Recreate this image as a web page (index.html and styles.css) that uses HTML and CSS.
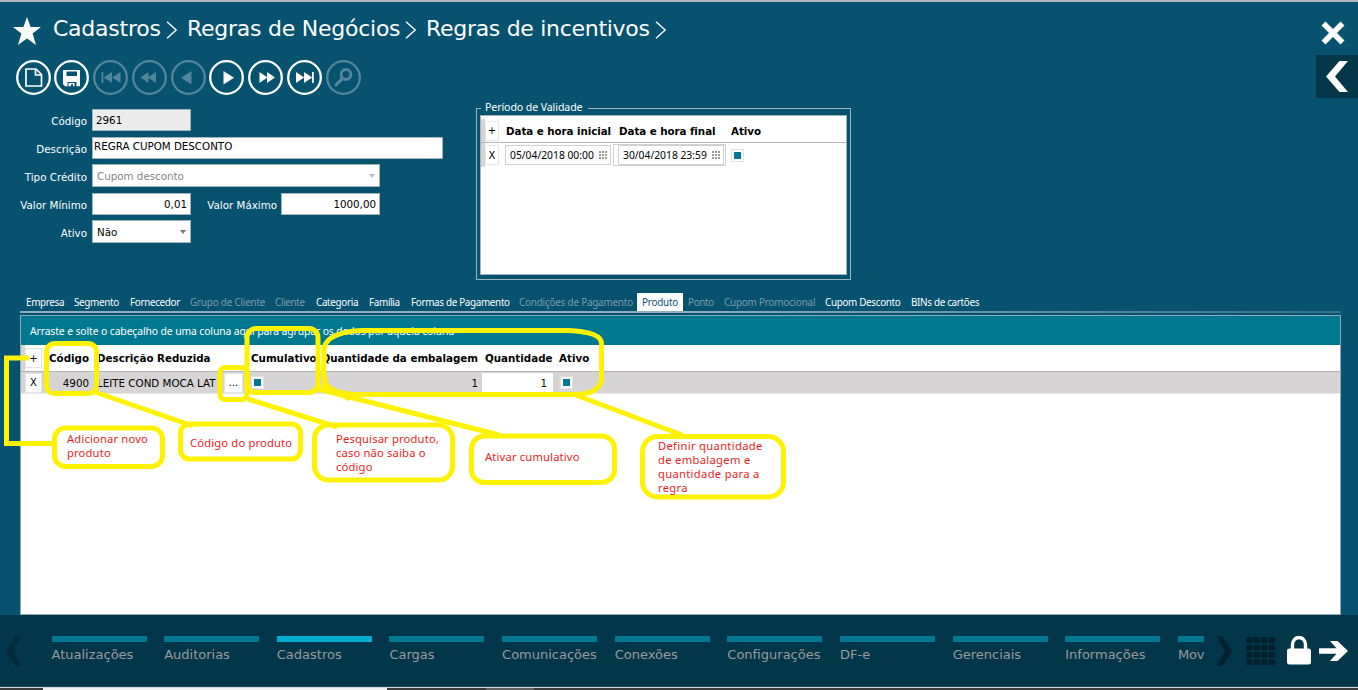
FILE: index.html
```html
<!DOCTYPE html>
<html lang="pt-BR">
<head>
<meta charset="utf-8">
<title>Regras de incentivos</title>
<link rel="stylesheet" href="styles.css">
</head>
<body>
<div class="app">
  <header class="header">
    <div class="crumbs">
      <svg class="star" viewBox="0 0 28 28"><path d="M14 0l3.600 10H28l-8.400 6.600L23 28l-9-6.600L5 28l3.400-11.400L0 10h10.400z" fill="#fff"/></svg>
      <span class="crumb c1">Cadastros</span><svg class="chev" viewBox="0 0 12 18"><path d="M1 .8L10.200 9 1 17.200"/></svg>
      <span class="crumb c2">Regras de Negócios</span><svg class="chev" viewBox="0 0 12 18"><path d="M1 .8L10.200 9 1 17.200"/></svg>
      <span class="crumb c3">Regras de incentivos</span><svg class="chev" viewBox="0 0 12 18"><path d="M1 .8L10.200 9 1 17.200"/></svg>
    </div>
    <div class="corner">
      <svg class="close" viewBox="0 0 24 24"><path d="M2.500 2.500l19 19M21.500 2.500l-19 19" stroke="#fff" stroke-width="5.600"/></svg>
      <div class="collapse"><svg viewBox="0 0 22 31"><path d="M13.500 0H22L9 15.500 22 31h-8.500L0 15.500z" fill="#fff"/></svg></div>
    </div>
  </header>

  <div class="toolbar">
    <svg class="tool" viewBox="0 0 35 35"><circle cx="17.500" cy="17.500" r="16.300"/><path d="M10 9h10l5.500 5.500V26H10zM19.500 9v6h6" fill="none" stroke="#fff" stroke-width="1.700"/></svg>
    <svg class="tool" viewBox="0 0 35 35"><circle cx="17.500" cy="17.500" r="16.300"/><path fill-rule="evenodd" d="M9 10h17v16.300h-3.500V22h-9v4.300H11l-2-2zM12.500 11.500v4.500h10.500v-4.500z" fill="#fff"/><path d="M14.500 23h6v3.300h-1.500v-2h-2v2h-2.500z" fill="#fff"/></svg>
    <svg class="tool off" viewBox="0 0 35 35"><circle cx="17.500" cy="17.500" r="16.300"/><path d="M8.500 12h1.800v11H8.500zM19 12v11l-8.200-5.500zM27.500 12v11l-8.200-5.500z" fill="#fff"/></svg>
    <svg class="tool off" viewBox="0 0 35 35"><circle cx="17.500" cy="17.500" r="16.300"/><path d="M16.500 12v11l-8-5.500zM24 12v11l-8-5.500z" fill="#fff"/></svg>
    <svg class="tool off" viewBox="0 0 35 35"><circle cx="17.500" cy="17.500" r="16.300"/><path d="M20.500 11v13.500L10 17.700z" fill="#fff"/></svg>
    <svg class="tool" viewBox="0 0 35 35"><circle cx="17.500" cy="17.500" r="16.300"/><path d="M14.500 11v13.500L25 17.700z" fill="#fff"/></svg>
    <svg class="tool" viewBox="0 0 35 35"><circle cx="17.500" cy="17.500" r="16.300"/><path d="M11.500 12v11l8-5.500zM19 12v11l8-5.500z" fill="#fff"/></svg>
    <svg class="tool" viewBox="0 0 35 35"><circle cx="17.500" cy="17.500" r="16.300"/><path d="M25 12h1.800v11H25zM9 12v11l8.200-5.500zM17 12v11l8.200-5.500z" fill="#fff"/></svg>
    <svg class="tool off" viewBox="0 0 35 35"><circle cx="17.500" cy="17.500" r="16.300"/><circle class="lens" cx="20" cy="14.500" r="4.900"/><path d="M16.500 18.300L10 24.800" stroke="#fff" stroke-width="3.200" stroke-linecap="round"/></svg>
  </div>

  <section class="top">
    <form class="form">
      <div class="row"><label>Código</label><div class="field short readonly">2961</div></div>
      <div class="row"><label>Descrição</label><div class="field long">REGRA CUPOM DESCONTO</div></div>
      <div class="row"><label>Tipo Crédito</label><div class="field select wide disabled"><span>Cupom desconto</span><i></i></div></div>
      <div class="row"><label>Valor Mínimo</label><div class="field short num">0,01</div><label class="second">Valor Máximo</label><div class="field short num">1000,00</div></div>
      <div class="row"><label>Ativo</label><div class="field select short"><span>Não</span><i></i></div></div>
    </form>
    <div class="period">
      <div class="legend"><span>Período de Validade</span></div>
      <div class="ptable">
        <div class="phead"><b class="grip"></b><span class="btn">+</span><span class="th p1">Data e hora inicial</span><span class="th p2">Data e hora final</span><span class="th">Ativo</span></div>
        <div class="prow"><b class="grip"></b><span class="btn">X</span>
          <div class="date"><span>05/04/2018 00:00</span><svg viewBox="0 0 8 8"><path d="M0 1h8M0 4h8M0 7h8"/></svg></div>
          <div class="dcell"><div class="date"><span>30/04/2018 23:59</span><svg viewBox="0 0 8 8"><path d="M0 1h8M0 4h8M0 7h8"/></svg></div></div>
          <span class="check"></span>
        </div>
      </div>
    </div>
  </section>

  <nav class="tabs">
    <span class="t1">Empresa</span><span class="t2">Segmento</span><span class="t3">Fornecedor</span><span class="t4 dim">Grupo de Cliente</span><span class="t5 dim">Cliente</span><span class="t6">Categoria</span><span class="t7">Família</span><span class="t8">Formas de Pagamento</span><span class="t9 dim">Condições de Pagamento</span><span class="t10 active">Produto</span><span class="t11 dim">Ponto</span><span class="t12 dim">Cupom Promocional</span><span class="t13">Cupom Desconto</span><span class="t14">BINs de cartões</span>
  </nav>
  <div class="tabline"></div>

  <main class="panel">
    <div class="groupbar">Arraste e solte o cabeçalho de uma coluna aqui para agrupar os dados por aquela coluna</div>
    <div class="grid ghead"><b class="grip"></b><span class="btn">+</span><span class="r">Código</span><span class="desc">Descrição Reduzida</span><span class="cum">Cumulativo</span><span class="r">Quantidade da embalagem</span><span class="qt">Quantidade</span><span class="at">Ativo</span></div>
    <div class="grid grow"><b class="grip"></b><span class="btn">X</span><span class="r">4900</span><div class="desc prod"><span>LEITE COND MOCA LAT</span><span class="btn dots">...</span></div><span class="cum"><i class="check"></i></span><span class="r">1</span><span class="qty">1</span><span class="at"><i class="check"></i></span></div>
  </main>

  <footer class="nav">
    <svg class="arr" viewBox="0 0 16 30"><path d="M9.500 0h6L7 15l8.500 15h-6L0 15z" fill="#022c3d"/></svg>
    <div class="items">
      <div class="item">Atualizações</div><div class="item">Auditorias</div><div class="item on">Cadastros</div><div class="item">Cargas</div><div class="item">Comunicações</div><div class="item">Conexões</div><div class="item">Configurações</div><div class="item">DF-e</div><div class="item">Gerenciais</div><div class="item">Informações</div><div class="item last">Mov</div>
    </div>
    <svg class="arr right" viewBox="0 0 16 30"><path d="M6.500 0h-6L9 15 .5 30h6L16 15z" fill="#02222f"/></svg>
    <svg class="apps" viewBox="0 0 29 28"><path d="M0 3h29M0 10.500h29M0 18h29M0 25.300h29" stroke="#02202c" stroke-width="5.500" stroke-dasharray="6.300 1.270"/></svg>
    <svg class="lock" viewBox="0 0 24 29"><path d="M5.500 14V8.500a6.500 7 0 0 1 13 0V14" fill="none" stroke="#fff" stroke-width="3.400"/><rect y="12.500" width="24" height="16" rx="2.500" fill="#fff"/></svg>
    <svg class="go" viewBox="0 0 29 20"><path d="M0 7.300h17.500L11 0h7.500L29 10 18.500 20H11l6.500-7.300H0z" fill="#fff"/></svg>
  </footer>
  <div class="taskbar"><span class="tb1"></span><span class="tb2"></span></div>

  <svg class="marks" viewBox="0 0 1358 690">
    <path d="M29 358H6.500V443.500H54"/>
    <rect x="46.500" y="343.500" width="50" height="50" rx="8"/>
    <rect x="220" y="367.500" width="27" height="32" rx="5"/>
    <rect x="247" y="328.500" width="71" height="64" rx="9"/>
    <path d="M324.500 357Q322 344 331 338Q342 331 362 330.500H568Q601 332 601.500 343V380Q599 394 575 394.500H354Q331 393 326 384Q322 374 324.500 357Z"/>
    <rect x="54.500" y="428" width="108" height="38.500" rx="11"/>
    <rect x="180.500" y="424" width="120" height="35" rx="9"/>
    <rect x="314.500" y="425" width="138" height="55" rx="14"/>
    <rect x="471.500" y="436" width="143" height="46.500" rx="13"/>
    <rect x="642.500" y="436.500" width="141" height="60.500" rx="15"/>
    <path d="M92 391L193 426M248 399L337 427M318 389L499 435M322 384L350 399M573 394L682 435"/>
  </svg>
  <p class="note n1">Adicionar novo<br>produto</p>
  <p class="note n2">Código do produto</p>
  <p class="note n3">Pesquisar produto,<br>caso não saiba o<br>código</p>
  <p class="note n4">Ativar cumulativo</p>
  <p class="note n5">Definir quantidade<br>de embalagem e<br>quantidade para a<br>regra</p>
</div>
</body>
</html>
```
FILE: styles.css
```css
* { box-sizing: border-box; }
body { margin: 0; }
svg { display: block; flex: none; }
.app {
  position: relative;
  width: 1358px;
  height: 690px;
  overflow: hidden;
  display: flex;
  flex-direction: column;
  background: #07526f;
  border-top: 2px solid #b4b8bc;
  font-family: "DejaVu Sans", Verdana, sans-serif;
  font-size: 10.3px;
  color: #000;
}
.header { display: flex; justify-content: space-between; height: 56px; flex: none; }
.crumbs { display: flex; align-items: flex-start; padding: 12px 0 0 13px; color: #fff; font-size: 22px; line-height: 30px; }
.star { width: 28px; height: 28px; margin: 3px 12px 0 0; }
.crumb { white-space: nowrap; letter-spacing: -0.25px; }
.c1 { width: 113px; }
.c2 { width: 218px; }
.c3 { width: 229px; letter-spacing: -0.3px; }
.chev { width: 12px; height: 18px; margin: 7px 9px 0 0; fill: none; stroke: #fff; stroke-width: 1.4; }
.corner { width: 42px; display: flex; flex-direction: column; }
.close { width: 24px; height: 24px; margin: 19px 0 10px 5px; }
.collapse { width: 42px; height: 43px; flex: none; background: #033649; padding: 6px 0 0 10px; }
.collapse svg { width: 22px; height: 31px; }

.toolbar { display: flex; gap: 3.75px; padding: 1.5px 0 0 15.5px; height: 49px; flex: none; }
.tool { width: 35px; height: 35px; }
.tool circle { fill: none; stroke: #fff; stroke-width: 2.3; }
.tool .lens { stroke-width: 3; }
.off { opacity: .3; }

.top { display: flex; height: 186px; flex: none; }
.form { width: 476px; padding-top: 1px; display: flex; flex-direction: column; gap: 5px; }
.row { display: flex; align-items: center; height: 23px; }
.row label { width: 92px; padding: 3px 5px 0 0; text-align: right; color: #fff; }
.row .second { width: 90px; padding-right: 4px; }
.field { height: 22px; line-height: 20px; background: #fff; border: 1px solid #9db4bd; padding: 0 3px; white-space: nowrap; }
.short { width: 99px; }
.long { width: 351px; padding-left: 1px; line-height: 17px; }
.wide { width: 288px; }
.readonly { background: #ebebeb; }
.num { text-align: right; }
.select { height: 23px; padding: 0 4px; display: flex; justify-content: space-between; align-items: center; }
.select i { border: 3.5px solid transparent; border-top: 4px solid #777; border-bottom: 0; margin-top: 1px; }
.disabled { color: #858585; }
.disabled i { border-top-color: #bbb; }

.period { position: relative; width: 375px; height: 172px; margin-top: 1px; border: 1px solid #9db4bd; padding: 6px 3px 3px; }
.legend { position: absolute; left: 4px; top: -9px; width: 107px; padding-left: 4px; background: #07526f; color: #fff; font: 10.6px/14px "Noto Sans", sans-serif; white-space: nowrap; letter-spacing: -0.1px; }
.ptable { height: 160px; background: #fff; border: 1px solid #9db4bd; }
.phead, .prow { display: flex; align-items: center; }
.phead { height: 27px; border-bottom: 1px solid #b3b3b3; padding-top: 3px; }
.grip { align-self: stretch; width: 4px; background: #d6d4d5; }
.btn { display: flex; align-items: center; justify-content: center; width: 14px; height: 20px; background: #fff; border: 1px solid #e4e4e4; font-size: 10px; }
.th, .ghead { font-weight: bold; font-size: 10.3px; white-space: nowrap; }
.th { letter-spacing: -0.05px; }
.p1 { width: 113px; margin-left: 7px; }
.p2 { width: 112px; }
.prow { height: 24px; }
.date { display: flex; align-items: center; justify-content: space-between; width: 106px; height: 20px; padding: 0 3px 0 4px; border: 1px solid #d0d0d0; white-space: nowrap; font: 10.3px "Noto Sans", sans-serif; }
.prow > .date { margin-left: 6px; }
.date svg { width: 8px; height: 8px; }
.date path { stroke: #777; stroke-width: 1.6; stroke-dasharray: 2 1; }
.dcell { width: 113px; height: 22px; margin: 0 6px 0 2px; padding-left: 4px; border: 1px solid #d0d0d0; }
.check { display: block; width: 11px; height: 11px; background: #007990; border: 2px solid #fff; outline: 1px solid #e2e2e2; }

.tabs { display: flex; align-items: stretch; padding-left: 21px; height: 18px; flex: none; color: #fff; font: 9.9px/19px "Noto Sans", sans-serif; letter-spacing: -0.33px; white-space: nowrap; }
.tabs span { flex: none; padding-left: 5px; }
.t1 { width: 48px; } .t2 { width: 56px; } .t3 { width: 60px; } .t4 { width: 85px; } .t5 { width: 41px; }
.t6 { width: 53px; } .t7 { width: 42px; } .t8 { width: 108px; } .t9 { width: 123px; } .t10 { width: 46px; }
.t11 { width: 36px; } .t12 { width: 101px; } .t13 { width: 86px; }
.t4, .t9, .t10, .t12 { letter-spacing: -0.2px; }
.tabs .dim { color: #7a9dac; }
.tabs .active { background: #fff; color: #07526f; }
.tabline { width: 1321px; height: 2px; flex: none; margin: 0 0 2px 20px; background: linear-gradient(90deg, #8cafbd, #8cafbd 50%, #33708a); }

.panel { width: 1321px; margin-left: 20px; height: 300px; flex: none; background: #fff; border: 1px solid #8cabb7; }
.groupbar { height: 29px; background: #007990; color: #fff; padding-left: 9px; font: 10.4px/31px "Noto Sans", sans-serif; letter-spacing: -0.12px; white-space: nowrap; }
.grid { display: grid; grid-template-columns: 4px 18px 46px 154px 77px 158px 75px 1fr; align-items: center; }
.grid > .grip { height: 100%; }
.ghead { height: 27px; background: #fff; border-bottom: 1px solid #b3b3b3; }
.ghead .btn { font-weight: normal; }
.grid > .btn { width: 17px; }
.grow { height: 22px; background: #d6d4d5; border-bottom: 1px solid #e8e8e8; }
.grow .r { padding-top: 1px; }
.r { text-align: right; }
.desc { padding-left: 8px; white-space: nowrap; }
.prod { display: flex; align-items: center; justify-content: space-between; }
.dots { width: 19px; }
.cum { padding-left: 9px; }
.ghead .cum { padding-left: 8px; }
.qt { padding-left: 7px; }
.qty { width: 71px; height: 19px; margin-left: 4px; padding-right: 6px; background: #fff; text-align: right; line-height: 20px; }
.at { padding-left: 6px; }
.grow .at { padding-left: 8px; }

.nav { height: 72px; flex: none; display: flex; align-items: flex-start; background: #033649; border-bottom: 1px solid #0b4c60; padding: 21px 0 0 6px; }
.arr { width: 16px; height: 30px; margin-right: 29.5px; }
.items { display: flex; gap: 17.65px; width: 1152.5px; }
.item { flex: none; width: 95px; height: 34px; border-top: 6px solid #007990; color: #999b9d; font-size: 13px; line-height: 25px; white-space: nowrap; }
.last { width: 26px; letter-spacing: -0.2px; }
.on { border-top-color: #00adce; }
.right { margin: 0 14px 0 12px; }
.apps { width: 29px; height: 28px; margin-top: 1px; }
.lock { width: 24px; height: 29px; margin: 0 8px 0 12px; }
.go { width: 29px; height: 20px; margin-top: 5px; }
.taskbar { display: flex; height: 3px; flex: none; background: #3a3a3a; border-top: 1px solid #d4d4d4; }
.tb1 { width: 344px; margin-left: 43px; background: #f0f0f0; }
.tb2 { width: 48px; margin-left: 99px; background: #606060; }

.marks { position: absolute; left: 0; top: -2px; width: 1358px; height: 690px; fill: none; stroke: #fff200; stroke-width: 5; }
.note { position: absolute; margin: 0; color: #ed1c24; font: 11.2px/14px "Noto Sans", sans-serif; letter-spacing: 0.17px; white-space: nowrap; }
.n1 { left: 67px; top: 430px; }
.n2 { left: 190px; top: 434px; }
.n3 { left: 336px; top: 430px; }
.n4 { left: 485px; top: 448px; }
.n5 { left: 658px; top: 437px; letter-spacing: 0.32px; }
```
